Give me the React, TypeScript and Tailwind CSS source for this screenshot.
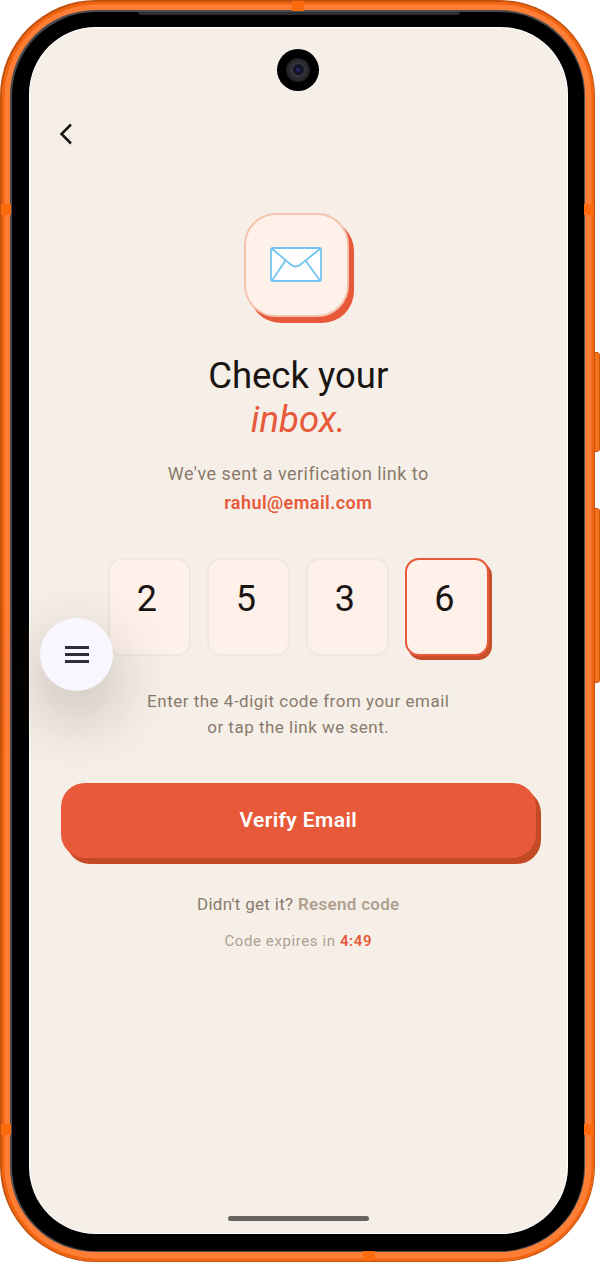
const ff = "font-['Roboto',sans-serif]";

function Band({ className }: { className: string }) {
  return <div className={`absolute bg-[#fb6a0c] ${className}`} />;
}

function Digit({ value, active }: { value: string; active?: boolean }) {
  return (
    <div
      className={
        active
          ? "w-[84px] h-[98px] box-border rounded-[14px] border-2 border-[#e8593a] bg-[#fdf1ea] shadow-[3px_4px_0_#c94e2a] flex justify-center pt-[18px] pr-[5px] text-[36px] leading-[42px] text-[#1a1512]"
          : "w-[83px] h-[98px] box-border rounded-[14px] border-2 border-[#efe8df] bg-[#fdf1ea] flex justify-center pt-[18px] pr-[5px] text-[36px] leading-[42px] text-[#1a1512]"
      }
    >
      {value}
    </div>
  );
}

function Envelope() {
  return (
    <svg width="52" height="35" viewBox="0 0 52 35" fill="none">
      <rect x="1" y="1" width="50" height="33" rx="1.5" fill="#ffffff" stroke="#74c4f2" strokeWidth="1.8" />
      <path d="M1.5 1.5 L21.5 18 Q25.5 21 30 18 L50.5 1.5" stroke="#74c4f2" strokeWidth="1.8" />
      <path d="M15.5 13.5 L2 33.5 M35.5 13.5 L50 33.5" stroke="#74c4f2" strokeWidth="1.8" />
    </svg>
  );
}

function Chevron() {
  return (
    <svg width="14" height="22" viewBox="0 0 14 22" fill="none">
      <path d="M12 1.5 L2.5 11 L12 20.5" stroke="#1a1512" strokeWidth="2.5" />
    </svg>
  );
}

function Camera() {
  return (
    <div className="w-[42px] h-[42px] rounded-full bg-black flex items-center justify-center">
      <div className="w-[24px] h-[24px] rounded-full bg-[radial-gradient(circle,#3a3a40_30%,#1e1e22_70%,#0a0a0c)] flex items-center justify-center">
        <div className="w-[11px] h-[11px] rounded-full bg-[#15152a] flex items-center justify-center">
          <div className="w-[4px] h-[4px] rounded-full bg-[#2a2470]" />
        </div>
      </div>
    </div>
  );
}

export default function App() {
  return (
    <div className={`relative w-[600px] h-[1262px] bg-white overflow-hidden ${ff}`}>
      {/* side buttons */}
      <div className="absolute left-[594px] top-[352px] w-[6px] h-[100px] box-border rounded-r-[3px] bg-[#f4701c] border border-[#cf560f]" />
      <div className="absolute left-[594px] top-[508px] w-[6px] h-[175px] box-border rounded-r-[3px] bg-[#f4701c] border border-[#cf560f]" />

      {/* phone frame */}
      <div className="relative w-[595px] h-[1262px] rounded-[96px] bg-[#c4520f] p-[1.5px]">
        <div className="w-full h-full rounded-[95px] bg-[#ff7e36] p-[8.5px] shadow-[inset_0_0_0_2.5px_#f0640f]">
          <div className="w-full h-full rounded-[85px] bg-[#4a4b4f] p-[1.5px]">
            <div className="w-full h-full rounded-[84px] bg-black pt-[16px] pr-[17px] pb-[18px] pl-[18.5px]">
              <div className="relative w-full h-full rounded-[66px] bg-[#f5efe8] overflow-hidden flex flex-col items-center shadow-[0_0_0_1px_#fff]">
                {/* back button row */}
                <div className="w-full flex justify-start pl-[29px] pt-[95px]">
                  <Chevron />
                </div>

                {/* mail tile */}
                <div className="mt-[68px] -ml-[4px] w-[105px] h-[104px] box-border rounded-[32px] border-2 border-[#f6c3ae] bg-[#fdf1ea] shadow-[5px_6px_0_#e8593a] flex items-center justify-center">
                  <Envelope />
                </div>

                <h1 className="mt-[37px] text-[36.5px] leading-[44px] font-normal text-[#1a1512] text-center">
                  Check your
                  <br />
                  <em className="italic text-[#e8593a]">inbox.</em>
                </h1>

                <p className="mt-[17px] text-[18px] leading-[29px] tracking-[0.45px] text-[#8a7a6b] text-center">
                  We've sent a verification link to
                  <br />
                  <span className="font-semibold text-[#e8593a]">rahul@email.com</span>
                </p>

                {/* code */}
                <div className="mt-[41px] flex gap-[16px]">
                  <Digit value="2" />
                  <Digit value="5" />
                  <Digit value="3" />
                  <Digit value="6" active />
                </div>

                <p className="mt-[32px] text-[17px] leading-[26px] tracking-[0.5px] text-[#8a7a6b] text-center">
                  Enter the 4-digit code from your email
                  <br />
                  or tap the link we sent.
                </p>

                {/* verify */}
                <div className="mt-[43px] w-[475px] h-[75px] pt-[1px] rounded-[24px] bg-[#e8593a] shadow-[5px_6px_0_#c44a26] flex items-center justify-center text-[21px] tracking-[0.4px] font-semibold text-white">
                  Verify Email
                </div>

                <p className="mt-[34px] text-[17px] leading-[24px] tracking-[0.3px] text-[#8a7a6b] text-center">
                  Didn't get it? <span className="font-semibold text-[#b0a090]">Resend code</span>
                </p>
                <p className="mt-[15px] text-[15px] leading-[20px] tracking-[0.6px] text-[#b0a090] text-center">
                  Code expires in <span className="font-semibold text-[#e8593a]">4:49</span>
                </p>

                {/* overlays */}
                <div className="absolute left-[247px] top-[21px]">
                  <Camera />
                </div>
                <div className="absolute left-[198px] top-[1188px] w-[141px] h-[5px] rounded-full bg-[#666460]" />
              </div>
            </div>
          </div>
        </div>

        {/* top speaker edge */}
        <div className="absolute left-[138px] top-[12px] w-[322px] h-[3px] rounded-b-[4px] bg-[#2e2e31]" />

        {/* antenna bands */}
        <Band className="left-[1px] top-[204px] w-[10px] h-[11px]" />
        <Band className="right-[1px] top-[204px] w-[10px] h-[11px]" />
        <Band className="left-[1px] top-[1124px] w-[10px] h-[11px]" />
        <Band className="right-[1px] top-[1124px] w-[10px] h-[11px]" />
        <Band className="left-[292px] top-[1px] w-[12px] h-[10px]" />
        <Band className="left-[363px] bottom-[1px] w-[12px] h-[10px]" />
      </div>

      {/* floating menu */}
      <div className="absolute left-[40px] top-[618px] w-[73px] h-[73px] rounded-full bg-[#f8f6fe] shadow-[0_24px_64px_rgba(60,40,20,0.3)] flex flex-col items-center justify-center gap-[4px]">
        <div className="w-[24px] h-[3px] bg-[#2f2f3a]" />
        <div className="w-[24px] h-[3px] bg-[#2f2f3a]" />
        <div className="w-[24px] h-[3px] bg-[#2f2f3a]" />
      </div>
    </div>
  );
}
